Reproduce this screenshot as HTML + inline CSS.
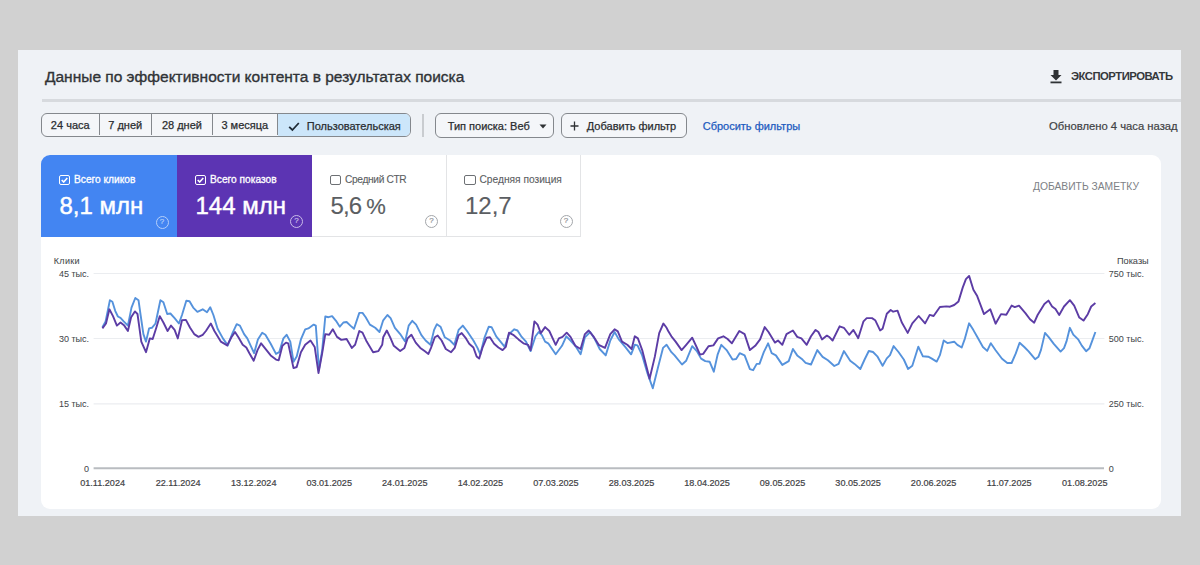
<!DOCTYPE html>
<html><head><meta charset="utf-8">
<style>
*{margin:0;padding:0;box-sizing:border-box}
html,body{width:1200px;height:565px;overflow:hidden;background:#d1d1d1;font-family:"Liberation Sans",sans-serif}
.abs{position:absolute}
#panel{position:absolute;left:18px;top:50px;width:1163px;height:466px;background:#eff2f6}
.t{position:absolute;white-space:nowrap;line-height:1}
#title{left:45px;top:69px;font-size:15.5px;color:#303336;-webkit-text-stroke:0.35px #303336}
#divider{left:42px;top:99.2px;width:1139px;height:2.6px;background:#d7dade}
.chips{position:absolute;left:41px;top:113px;width:370px;height:24.3px;border:1.8px solid #84888d;border-radius:6px;overflow:hidden;background:#f4f6f9}
.chip{position:absolute;top:0;height:21px;border-right:1.8px solid #84888d;font-size:11px;color:#2a2d30;line-height:22px;text-align:center;-webkit-text-stroke:0.25px #2a2d30}
.act{background:#cce6fa}
.ob{position:absolute;height:24.5px;border:1.9px solid #84888d;border-radius:6px;background:#f4f6f9;font-size:11px;color:#2a2d30;line-height:24px;-webkit-text-stroke:0.25px #2a2d30}
.card{position:absolute;left:41px;top:155px;width:1120px;height:354px;background:#fff;border-radius:9px;overflow:hidden}
.tile{position:absolute;top:0;height:82px}
.tl{position:absolute;left:33px;top:20px;font-size:10.2px;white-space:nowrap;line-height:1;-webkit-text-stroke:0.3px currentColor}
.tv{position:absolute;left:18.5px;top:39.3px;font-size:24px;white-space:nowrap;line-height:1;-webkit-text-stroke:0.45px currentColor}
.cb{position:absolute;left:17.5px;top:19.5px;width:11.5px;height:10.5px;border:1.8px solid;border-radius:2px}
.help{position:absolute;left:113px;top:60.3px;width:13px;height:13px;border:1.8px solid;border-radius:50%;font-size:8px;line-height:9.8px;text-align:center;-webkit-text-stroke:0.2px currentColor}
.yl{position:absolute;font-size:9px;color:#45484b;white-space:nowrap;line-height:1;-webkit-text-stroke:0.05px #45484b}
.dt{position:absolute;top:479px;width:80px;text-align:center;font-size:9.1px;color:#3f4245;line-height:1;-webkit-text-stroke:0.2px #3f4245}
</style></head><body>
<div id="panel"></div>
<div class="t" id="title">Данные по эффективности контента в результатах поиска</div>
<div class="abs" id="divider"></div>

<svg class="abs" style="left:1049px;top:69px" width="14" height="15" viewBox="0 0 14 15"><path d="M4.5 1h5v5h3L7 11.5 1.5 6h3z" fill="#2f3235"/><rect x="1.5" y="12.5" width="11" height="1.8" fill="#2f3235"/></svg>
<div class="t" style="left:1071px;top:71px;font-size:11.3px;font-weight:bold;color:#35383b;letter-spacing:-0.5px">ЭКСПОРТИРОВАТЬ</div>

<div class="chips">
 <div class="chip" style="left:0;width:57.5px">24 часа</div>
 <div class="chip" style="left:57.5px;width:52.5px">7 дней</div>
 <div class="chip" style="left:110px;width:60.8px">28 дней</div>
 <div class="chip" style="left:170.8px;width:65px">3 месяца</div>
 <div class="chip act" style="left:235.8px;width:134px;height:22px;border-right:none;text-align:left;padding-left:29px;line-height:24px">Пользовательская</div>
 <svg class="abs" style="left:245.5px;top:6.5px" width="12" height="11" viewBox="0 0 12 11"><path d="M1.2 5.8l3.2 3.2L10.8 2" stroke="#1f2a36" stroke-width="1.8" fill="none"/></svg>
</div>
<div class="abs" style="left:422px;top:114px;width:1.5px;height:23px;background:#c9ccd0"></div>
<div class="ob" style="left:434.7px;top:113.3px;width:119.5px;padding-left:12px">Тип поиска: Веб</div>
<svg class="abs" style="left:539px;top:124px" width="8" height="5" viewBox="0 0 8 5"><path d="M0.5 0.5h7L4 4.5z" fill="#2f3235"/></svg>
<div class="ob" style="left:560.8px;top:113.3px;width:126px;padding-left:25px">Добавить фильтр</div>
<svg class="abs" style="left:569.5px;top:121px" width="10" height="10" viewBox="0 0 10 10"><path d="M4.5 0.5v9M0.5 5h8" stroke="#2f3235" stroke-width="1.3"/></svg>
<div class="t" style="left:702.7px;top:121px;font-size:11px;color:#1d5bbf;-webkit-text-stroke:0.25px #1d5bbf">Сбросить фильтры</div>
<div class="t" style="left:1049px;top:121px;font-size:11.25px;color:#3f4245;-webkit-text-stroke:0.2px #3f4245">Обновлено 4 часа назад</div>

<div class="card">
 <div class="tile" style="left:0;width:136px;background:#4385f2;color:#fff">
  <div class="cb" style="border-color:#fff"></div>
  <svg class="abs" style="left:20px;top:22px" width="7" height="6" viewBox="0 0 7 6"><path d="M0.7 3l2 2L6.3 1" stroke="#fff" stroke-width="1.6" fill="none"/></svg>
  <div class="tl">Всего кликов</div>
  <div class="tv">8,1 млн</div>
  <div class="help" style="left:114.5px;top:60.8px;border-color:#b5cffa;color:#b5cffa">?</div>
 </div>
 <div class="tile" style="left:136px;width:135px;background:#5c34b3;color:#fff">
  <div class="cb" style="border-color:#fff"></div>
  <svg class="abs" style="left:20px;top:22px" width="7" height="6" viewBox="0 0 7 6"><path d="M0.7 3l2 2L6.3 1" stroke="#fff" stroke-width="1.6" fill="none"/></svg>
  <div class="tl">Всего показов</div>
  <div class="tv">144 млн</div>
  <div class="help" style="border-color:#c9bbe8;color:#c9bbe8">?</div>
 </div>
 <div class="tile" style="left:271px;width:134.5px;border-right:1px solid #e3e4e6;border-bottom:1px solid #e3e4e6;color:#5b5e62">
  <div class="cb" style="border-color:#6d7074"></div>
  <div class="tl" style="letter-spacing:-0.35px;-webkit-text-stroke:0.1px currentColor">Средний CTR</div>
  <div class="tv" style="-webkit-text-stroke:0.15px currentColor"><span style="letter-spacing:-0.9px">5,6</span><span style="margin-left:5px;font-size:22px">%</span></div>
  <div class="help" style="border-color:#a3a6aa;color:#909397">?</div>
 </div>
 <div class="tile" style="left:405.5px;width:134.5px;border-right:1px solid #e3e4e6;border-bottom:1px solid #e3e4e6;color:#5b5e62">
  <div class="cb" style="border-color:#6d7074"></div>
  <div class="tl" style="-webkit-text-stroke:0.1px currentColor">Средняя позиция</div>
  <div class="tv" style="-webkit-text-stroke:0.15px currentColor">12,7</div>
  <div class="help" style="border-color:#a3a6aa;color:#909397">?</div>
 </div>
 <div class="t" style="right:22px;top:27px;font-size:10.3px;color:#7d8185">ДОБАВИТЬ ЗАМЕТКУ</div>
</div>

<div class="yl" style="left:53.8px;top:257px;font-size:9px;letter-spacing:0.3px">Клики</div>
<div class="yl" style="right:1111px;top:269.5px">45 тыс.</div>
<div class="yl" style="right:1111px;top:335px">30 тыс.</div>
<div class="yl" style="right:1111px;top:400px">15 тыс.</div>
<div class="yl" style="right:1111px;top:464.5px">0</div>
<div class="yl" style="right:51.3px;top:257px;font-size:9.2px">Показы</div>
<div class="yl" style="left:1108.8px;top:269.5px">750 тыс.</div>
<div class="yl" style="left:1108.8px;top:335px">500 тыс.</div>
<div class="yl" style="left:1108.8px;top:400px">250 тыс.</div>
<div class="yl" style="left:1108.8px;top:464.5px">0</div>
<div class="dt" style="left:62.6px">01.11.2024</div><div class="dt" style="left:138.1px">22.11.2024</div><div class="dt" style="left:213.7px">13.12.2024</div><div class="dt" style="left:289.2px">03.01.2025</div><div class="dt" style="left:364.8px">24.01.2025</div><div class="dt" style="left:440.4px">14.02.2025</div><div class="dt" style="left:515.9px">07.03.2025</div><div class="dt" style="left:591.5px">28.03.2025</div><div class="dt" style="left:667.0px">18.04.2025</div><div class="dt" style="left:742.5px">09.05.2025</div><div class="dt" style="left:818.1px">30.05.2025</div><div class="dt" style="left:893.6px">20.06.2025</div><div class="dt" style="left:969.2px">11.07.2025</div><div class="dt" style="left:1044.8px">01.08.2025</div>

<svg class="abs" style="left:0;top:0" width="1200" height="565">
 <g stroke="#ebedf0" stroke-width="1.2">
  <line x1="93.6" y1="273.5" x2="1104.4" y2="273.5"/>
  <line x1="93.6" y1="338.5" x2="1104.4" y2="338.5"/>
  <line x1="93.6" y1="403.8" x2="1104.4" y2="403.8"/>
 </g>
 <line x1="93.6" y1="468.3" x2="1104" y2="468.3" stroke="#b9bcc0" stroke-width="2"/>
 <polyline fill="none" stroke="#5592dc" stroke-width="1.9" stroke-linejoin="round" points="102.4,327.1 105.6,321.4 109.9,300.2 112.4,301.7 115.2,310.8 117.9,316.5 120.5,317.8 123.7,321.4 127.9,325.6 131.5,307.6 135.3,298.0 138.5,300.2 140.6,315.0 143.4,334.1 146.0,341.6 149.1,328.4 151.9,327.8 155.5,323.5 160.4,300.2 163.4,302.3 167.2,314.0 170.4,313.5 174.6,318.2 178.9,323.5 182.0,315.0 186.3,300.8 189.5,301.2 193.2,307.6 197.4,311.8 202.7,309.3 207.0,312.3 210.2,307.2 213.4,315.0 217.6,328.8 222.9,338.4 227.8,345.4 232.5,333.1 236.7,324.2 239.9,325.6 244.1,334.1 247.3,338.4 254.1,353.2 257.9,339.4 262.2,332.7 265.4,334.8 270.7,343.7 276.0,353.9 279.2,352.2 283.4,338.4 286.6,334.8 290.3,341.6 293.5,361.7 296.7,356.4 300.9,339.4 305.2,329.3 308.4,328.4 313.7,324.6 315.8,325.6 317.9,354.3 319.0,369.2 322.2,350.1 325.3,316.5 328.5,317.2 332.1,316.1 336.0,320.8 339.8,326.7 343.4,322.5 346.6,322.0 350.4,325.6 354.0,328.8 359.3,312.9 362.5,312.9 365.7,317.2 369.9,324.6 375.2,327.8 379.5,332.0 383.2,320.3 387.4,315.0 390.6,318.2 394.9,327.8 400.2,334.1 405.1,341.6 408.7,325.6 412.3,320.8 416.1,324.6 421.4,335.2 425.6,340.5 430.5,344.8 434.1,329.9 436.9,324.2 440.5,326.7 444.8,337.3 450.1,340.5 454.3,344.8 458.6,329.9 462.8,325.6 467.0,331.0 473.4,340.5 477.5,347.9 480.3,354.3 484.6,337.3 488.8,326.7 491.6,327.1 496.2,336.3 500.5,341.6 504.7,346.9 509.0,334.1 514.3,329.3 517.5,330.5 521.7,336.9 526.0,341.6 530.6,351.1 535.5,336.3 538.7,332.0 541.9,335.2 545.1,341.6 548.2,343.3 555.7,354.3 562.0,345.8 566.3,336.3 570.5,340.5 575.3,345.8 580.6,354.3 584.9,337.3 590.2,332.0 594.4,338.4 599.7,349.0 605.7,355.4 610.3,340.5 614.6,332.0 618.8,339.4 625.2,346.9 631.1,354.3 634.8,344.8 637.5,345.4 642.2,355.4 647.5,373.4 652.8,388.3 658.1,367.0 663.0,347.9 666.6,344.8 671.4,352.2 674.6,355.4 682.0,364.5 686.2,360.7 692.2,346.2 696.8,351.1 701.1,358.6 705.3,361.1 709.6,361.7 713.8,371.7 717.7,354.3 721.3,344.8 726.6,350.1 732.5,359.6 736.1,359.0 739.7,353.2 744.6,355.4 749.9,369.2 753.1,370.2 756.7,363.9 759.5,363.9 763.8,352.2 768.1,343.3 771.7,353.2 775.9,355.4 782.3,364.9 788.7,361.1 792.9,349.0 797.2,355.4 802.5,359.6 805.6,362.8 811.0,364.5 817.3,350.1 822.6,356.9 827.9,360.3 834.3,366.0 838.6,363.9 843.9,351.1 850.2,360.7 854.5,363.9 860.3,369.0 864.6,359.5 868.8,351.0 873.0,352.0 877.3,356.3 882.6,365.8 886.8,358.4 890.0,355.2 893.6,346.1 898.5,352.0 903.8,359.5 908.1,369.0 912.3,365.8 918.3,346.7 922.9,356.3 928.2,356.7 931.4,358.4 936.7,361.6 939.9,355.2 943.7,340.4 947.4,343.1 954.2,341.7 957.4,344.9 961.7,347.5 964.9,338.6 969.1,323.3 973.4,330.1 977.6,337.5 982.9,347.0 987.2,350.9 990.8,343.2 995.6,350.2 1002.0,358.7 1007.3,363.0 1011.6,363.0 1015.8,353.4 1019.6,342.8 1024.3,347.0 1028.6,351.3 1035.1,359.2 1038.5,356.7 1041.0,349.9 1045.0,332.9 1048.7,337.1 1053.8,343.9 1060.6,351.6 1064.0,348.2 1066.5,341.4 1069.9,327.8 1073.3,334.6 1078.4,339.7 1081.8,345.6 1086.1,351.2 1089.5,348.2 1092.0,341.4 1095.4,332.0"/>
 <polyline fill="none" stroke="#5c3ca5" stroke-width="1.9" stroke-linejoin="round" points="102.4,328.4 106.0,323.5 109.4,309.3 113.0,316.1 116.9,325.6 120.5,322.5 124.3,325.6 127.9,331.0 131.1,317.2 134.9,311.4 137.5,314.0 141.3,341.6 146.0,352.2 149.8,338.4 152.7,339.0 156.6,326.7 159.8,316.1 163.4,322.5 167.6,331.0 171.0,325.6 174.6,329.9 177.8,338.4 182.0,320.3 185.9,319.9 190.1,327.8 194.2,334.1 198.5,336.9 202.7,334.8 205.9,331.0 210.8,323.5 214.4,331.0 220.8,341.6 227.2,345.4 231.4,337.3 235.0,332.0 238.4,337.3 242.7,344.8 246.3,347.5 249.4,353.2 253.7,360.7 257.5,350.1 261.1,343.3 264.7,347.9 270.7,355.4 276.0,359.6 278.7,360.3 282.4,345.8 286.0,342.6 288.2,343.3 293.5,368.1 296.7,367.0 300.9,352.2 305.2,344.8 310.5,340.5 314.7,346.9 318.5,373.0 322.2,353.2 325.3,334.1 329.2,334.8 332.8,329.3 337.0,336.9 341.3,339.9 346.6,339.0 351.9,347.9 355.1,344.8 359.3,331.0 362.5,332.7 366.7,341.6 373.1,352.2 378.4,351.1 382.2,344.8 383.2,337.3 386.8,330.5 390.2,337.3 393.8,345.8 400.2,351.1 404.4,347.9 407.6,338.4 411.4,334.8 415.7,342.6 420.3,347.9 424.6,351.1 428.4,353.9 431.0,347.9 434.8,337.3 437.7,335.6 441.6,340.5 445.8,349.0 451.1,352.2 454.7,347.9 458.6,335.2 461.7,333.1 466.0,338.4 469.2,343.7 473.4,347.5 476.6,356.4 479.2,358.6 482.4,347.9 486.7,337.7 489.9,337.3 494.1,343.7 498.4,347.5 502.6,350.1 505.8,346.9 509.0,332.7 513.2,334.8 518.5,339.4 523.4,343.3 528.1,344.8 530.6,350.1 534.4,321.4 537.6,324.6 540.8,333.1 545.1,327.1 549.3,331.0 555.7,344.8 558.9,338.4 562.5,336.9 566.7,332.7 570.5,336.9 575.3,345.8 580.6,349.0 584.9,334.1 588.7,330.5 593.4,336.3 598.7,344.8 605.0,347.9 610.3,334.1 614.6,329.3 617.8,331.4 622.0,341.6 627.3,344.8 631.6,349.0 634.8,336.3 637.9,338.4 642.2,350.1 649.6,378.7 654.9,356.4 659.2,333.1 663.4,323.5 666.6,327.8 668.2,331.0 671.4,336.3 675.6,341.6 681.6,350.1 686.2,344.8 692.2,337.7 696.8,347.5 700.0,354.7 703.2,353.9 708.5,346.2 713.4,345.4 718.1,338.4 723.4,336.3 727.6,339.0 731.9,343.3 739.3,331.0 744.6,334.1 749.9,350.1 755.2,345.8 760.1,339.4 764.7,327.1 768.5,332.0 774.9,342.6 778.0,340.5 782.3,344.8 786.5,334.1 792.9,330.5 797.2,336.9 801.4,338.4 806.7,344.8 811.0,336.3 815.6,329.9 818.4,332.0 822.0,339.4 826.9,335.6 829.6,337.3 832.6,340.5 839.6,326.3 843.9,327.8 849.2,334.8 853.4,329.9 857.7,337.3 858.2,338.2 863.5,321.3 866.7,318.1 872.0,318.1 875.2,320.2 880.1,330.4 882.6,328.7 886.8,313.8 890.7,310.0 893.2,311.7 897.5,310.6 901.7,322.3 907.7,332.9 912.3,323.4 918.7,316.0 925.1,323.4 929.7,314.9 933.6,316.0 939.9,307.0 946.3,306.4 950.0,306.7 954.2,305.0 958.5,301.4 962.7,287.6 965.9,279.1 969.1,275.9 973.4,289.7 977.2,296.1 984.0,314.1 990.3,309.3 995.6,323.7 1001.0,314.1 1006.3,314.8 1011.6,305.6 1014.8,307.1 1019.0,305.6 1025.4,313.1 1030.0,319.3 1034.2,322.7 1037.6,315.0 1044.4,304.0 1048.4,300.6 1052.1,306.5 1055.5,309.1 1059.2,315.0 1064.0,306.5 1069.9,300.2 1074.2,305.7 1079.3,317.6 1083.5,320.6 1087.8,314.2 1091.2,306.5 1095.4,303.1"/>
</svg>
</body></html>
